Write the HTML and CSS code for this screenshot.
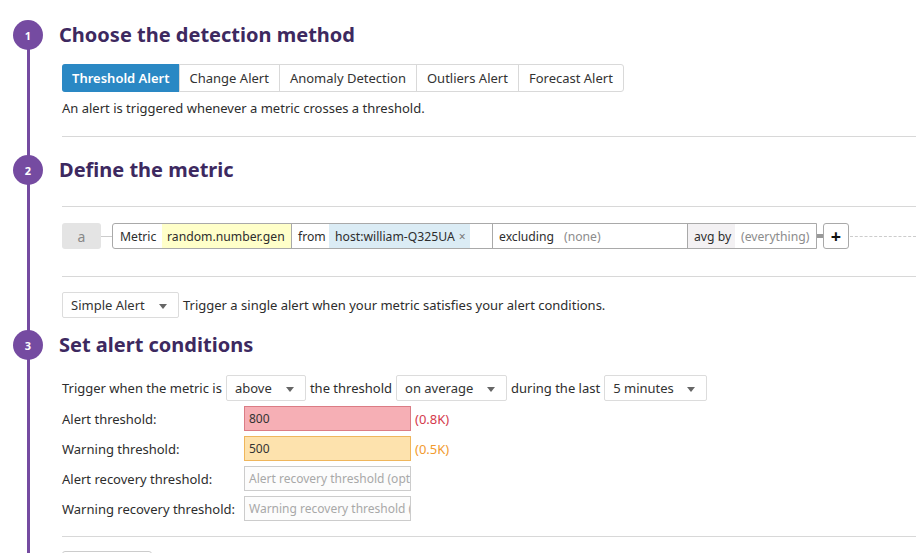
FILE: index.html
```html
<!DOCTYPE html>
<html lang="en">
<head>
<meta charset="utf-8">
<title>New Monitor</title>
<link rel="stylesheet" href="styles.css">
</head>
<body>
<main class="page">
  <div class="step-head">
    <span class="num">1</span>
    <h2>Choose the detection method</h2>
  </div>
  <section class="body">
    <div class="tabs">
      <span class="tab active">Threshold Alert</span>
      <span class="tab">Change Alert</span>
      <span class="tab">Anomaly Detection</span>
      <span class="tab">Outliers Alert</span>
      <span class="tab">Forecast Alert</span>
    </div>
    <p class="desc">An alert is triggered whenever a metric crosses a threshold.</p>
    <hr class="rule r1">
  </section>

  <div class="step-head s2">
    <span class="num">2</span>
    <h2>Define the metric</h2>
  </div>
  <section class="body">
    <hr class="rule r2">
    <div class="query">
      <span class="qname">a</span>
      <span class="qlink"></span>
      <div class="qbox">
        <span class="seg first">Metric</span>
        <span class="seg metric">random.number.gen</span>
        <span class="seg sep from">from</span>
        <span class="seg tag">host:william-Q325UA <span class="x">×</span></span>
        <span class="seg fill"></span>
        <span class="seg sep excl">excluding <span class="muted">(none)</span></span>
        <span class="seg sep avg">avg by</span>
        <span class="seg muted every">(everything)</span>
      </div>
      <span class="qknob"></span>
      <span class="plus">+</span>
      <span class="dash"></span>
    </div>
    <hr class="rule r3">
    <div class="simple">
      <span class="select sel-simple">Simple Alert<i class="caret"></i></span>
      <span>Trigger a single alert when your metric satisfies your alert conditions.</span>
    </div>
  </section>

  <div class="step-head s3">
    <span class="num">3</span>
    <h2>Set alert conditions</h2>
  </div>
  <section class="body">
    <div class="trigger">
      <span>Trigger when the metric is</span>
      <span class="select sel-above">above<i class="caret"></i></span>
      <span>the threshold</span>
      <span class="select sel-avg">on average<i class="caret"></i></span>
      <span>during the last</span>
      <span class="select sel-min">5 minutes<i class="caret"></i></span>
    </div>
    <div class="thresholds">
      <span class="lbl">Alert threshold:</span>
      <span class="inp alert">800</span>
      <span class="note red">(0.8K)</span>

      <span class="lbl">Warning threshold:</span>
      <span class="inp warn">500</span>
      <span class="note orange">(0.5K)</span>

      <span class="lbl">Alert recovery threshold:</span>
      <span class="inp ph">Alert recovery threshold (optional)</span>
      <span class="note"></span>

      <span class="lbl">Warning recovery threshold:</span>
      <span class="inp ph">Warning recovery threshold (optional)</span>
      <span class="note"></span>
    </div>
    <hr class="rule r4">
    <div class="next-box"></div>
  </section>
</main>
</body>
</html>
```
FILE: styles.css
```css
* { box-sizing: border-box; }
html, body { margin: 0; padding: 0; background: #fff; }
body {
  font-family: "Noto Sans", "Open Sans", "Liberation Sans", sans-serif;
  font-size: 13px;
  color: #2d2d2d;
  overflow: hidden;
  height: 553px;
}
.page {
  padding-top: 20px;
  min-height: 553px;
  background: linear-gradient(#754ba1, #754ba1) no-repeat 27px 40px / 3px 100%;
}
.step-head {
  display: flex;
  align-items: center;
  height: 30px;
  padding-left: 13px;
}
.num {
  width: 30px;
  height: 30px;
  border-radius: 50%;
  background: #754ba1;
  color: #fff;
  font-weight: 700;
  font-size: 11px;
  display: flex;
  align-items: center;
  justify-content: center;
  flex: none;
}
.step-head h2 {
  margin: 0 0 0 16px;
  font-size: 20px;
  font-weight: 700;
  color: #3d2960;
  line-height: 30px;
}
.s2 { margin-top: 18px; }
.s3 { margin-top: 12px; }
.body { padding-left: 62px; }

.tabs {
  display: inline-flex;
  margin-top: 14px;
  border: 1px solid #d9d9d9;
  border-radius: 3px;
  height: 28px;
}
.tab {
  display: flex;
  align-items: center;
  padding: 0 10px;
  border-left: 1px solid #d9d9d9;
  color: #333;
}
.tab:first-child { border-left: 0; }
.tab.active {
  background: #2a88c4;
  color: #fff;
  font-weight: 600;
  margin: -1px 0 -1px -1px;
  border-radius: 3px 0 0 3px;
  padding: 0 9px 0 10px;
}
.desc { margin: 7px 0 0; line-height: 18px; }
.rule { border: 0; border-top: 1px solid #d8d8d8; margin: 0; }
.r1 { margin-top: 19px; }
.r2 { margin-top: 21px; }
.r3 { margin-top: 27px; }
.r4 { margin-top: 15px; }

.query {
  display: flex;
  align-items: center;
  margin-top: 16px;
  height: 26px;
  font-size: 12.2px;
}
.qname {
  width: 39px;
  height: 26px;
  background: #e4e4e4;
  border-radius: 3px;
  color: #888;
  font-size: 14px;
  display: flex;
  align-items: center;
  justify-content: center;
}
.qlink { width: 11px; border-top: 1px solid #ccc; }
.qbox {
  display: flex;
  height: 26px;
  border: 1px solid #a9a9a9;
  border-radius: 3px 0 0 3px;
}
.seg { display: flex; align-items: center; padding: 0 5px; white-space: nowrap; flex: none; }
.seg.first { width: 49px; padding-left: 7px; }
.metric { background: #ffffc9; width: 129px; }
.sep { border-left: 1px solid #a9a9a9; }
.from { width: 38px; padding-left: 6px; }
.tag { background: #dbecf5; width: 141px; padding-left: 6px; }
.x { color: #777; font-size: 12px; margin-left: 4px; }
.fill { width: 22px; padding: 0; }
.excl { width: 195px; padding-left: 6px; }
.excl .muted { margin-left: 10px; }
.muted { color: #8c8c8c; }
.avg { background: #f3f1f3; width: 48px; padding-left: 6px; }
.every { width: 81px; padding-left: 6px; }
.qknob { width: 6px; height: 4px; background: #999; }
.plus {
  width: 26px;
  height: 26px;
  border: 1px solid #a9a9a9;
  border-radius: 3px;
  display: flex;
  align-items: center;
  justify-content: center;
  font-size: 18px;
  font-weight: 700;
  color: #111;
}
.dash { flex: 1; border-top: 1px dashed #ccc; margin-left: 1px; }

.simple {
  display: flex;
  align-items: center;
  margin-top: 15px;
  gap: 4px;
}
.select {
  position: relative;
  display: flex;
  align-items: center;
  height: 26px;
  border: 1px solid #dcdcdc;
  border-radius: 2px;
  padding-left: 8px;
  color: #333;
}
.caret {
  position: absolute;
  right: 11px;
  top: 11px;
  width: 0;
  height: 0;
  border-left: 4px solid transparent;
  border-right: 4px solid transparent;
  border-top: 5px solid #666;
}
.sel-simple { width: 117px; }
.sel-above { width: 80px; }
.sel-avg { width: 111px; }
.sel-min { width: 103px; }

.trigger {
  display: flex;
  align-items: center;
  gap: 4px;
  margin-top: 15px;
}
.thresholds {
  display: grid;
  grid-template-columns: 178px 167px auto;
  grid-auto-rows: 25px;
  row-gap: 5px;
  column-gap: 4px;
  margin-top: 5px;
  align-items: center;
}
.lbl { white-space: nowrap; }
.inp {
  height: 25px;
  border: 1px solid #ccc;
  padding: 0 4px;
  display: flex;
  align-items: center;
  white-space: nowrap;
  overflow: hidden;
  font-size: 12px;
}
.inp.alert { background: #f6afb5; border-color: #db7c85; color: #333; }
.inp.warn { background: #fde2ad; border-color: #efb65c; color: #333; }
.inp.ph { background: #fcfcfc; color: #a8a8a8; }
.note { white-space: nowrap; }
.red { color: #d43b4c; }
.orange { color: #f29b2e; }
.next-box {
  margin-top: 14px;
  width: 90px;
  height: 20px;
  border: 1px solid #ccc;
  border-radius: 3px;
}
```
